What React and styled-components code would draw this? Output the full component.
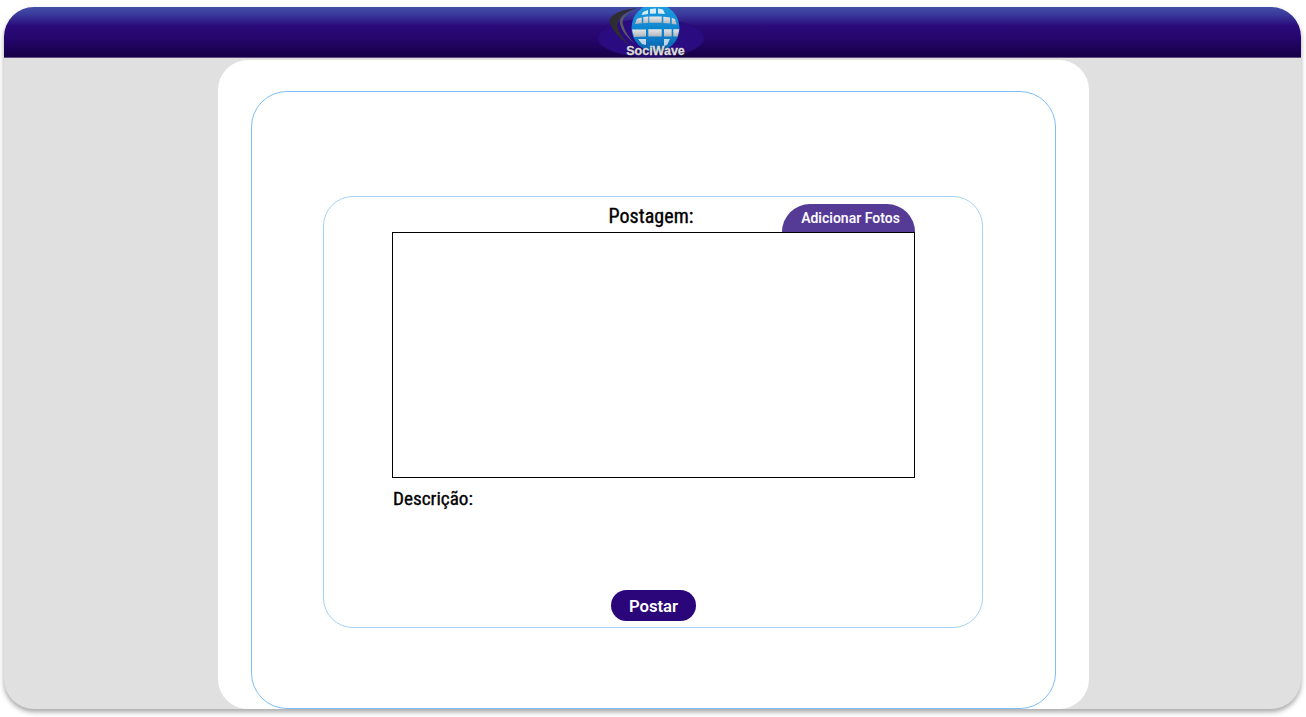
import React from "react";
import styled, { createGlobalStyle } from "styled-components";

const Global = createGlobalStyle`
  html, body { margin: 0; padding: 0; background: #fff; }
  body { font-family: Roboto, "Liberation Sans", sans-serif; }
  * { box-sizing: border-box; }
`;

const Frame = styled.div`
  width: 1297px;
  height: 702px;
  margin: 7px 0 8px 4px;
  background: #e0e0e0;
  border-radius: 30px;
  box-shadow: 0 3px 5px rgba(0, 0, 0, 0.35);
  display: flex;
  flex-direction: column;
  overflow: hidden;
`;

const Header = styled.header`
  flex: 0 0 51px;
  min-height: 0;
  display: flex;
  justify-content: center;
  background: linear-gradient(180deg, #424ea6 0%, #3a3a9c 15%, #2a0a78 38%, #26066e 60%, #170048 100%);
  border-bottom: 1px solid #5a4f80;
`;

const Logo = styled.svg`
  display: block;
  flex: none;
  width: 110px;
  height: 60px;
  margin-left: 1px;
  overflow: visible;
  position: relative;
  z-index: 1;
`;

const LogoText = styled.text`
  font-family: "Liberation Sans", Arial, sans-serif;
  font-weight: 700;
  font-size: 12.5px;
  fill: #dcdcdc;
  stroke: #dcdcdc;
  stroke-width: 0.3px;
`;

const Main = styled.main`
  flex: 1;
  min-height: 0;
  display: flex;
  justify-content: center;
  padding: 2px 0 0 2px;
`;

const Card = styled.section`
  width: 871px;
  background: #fff;
  border-radius: 30px;
  padding: 31px 33px 0;
`;

const Outer = styled.div`
  width: 805px;
  height: 618px;
  border: 1px solid #7dbdf8;
  border-radius: 36px;
  padding: 104px 72px 0 71px;
`;

const PostBox = styled.div`
  width: 660px;
  height: 432px;
  border: 1px solid #a5d2f8;
  border-radius: 30px;
  padding: 7px 67px 0 68px;
  display: flex;
  flex-direction: column;
`;

const TopRow = styled.div`
  height: 28px;
  position: relative;
  display: flex;
  justify-content: center;
`;

const Label = styled.div`
  font-size: 20px;
  font-weight: 400;
  line-height: 24px;
  color: #000;
  font-stretch: 75%;
  -webkit-text-stroke: 0.35px #000;
`;

const Title = styled(Label)`
  margin-left: -5px;
  letter-spacing: 0.05px;
`;

const Description = styled(Label)`
  font-size: 19.2px;
  margin: 9px 0 0 1px;
  align-self: flex-start;
`;

const AddPhotos = styled.button`
  position: absolute;
  right: 0;
  top: 0;
  width: 133px;
  height: 28px;
  border: 0;
  padding: 0 0 0 4px;
  background: #553a96;
  color: #fbf9fe;
  border-radius: 28px 28px 0 0;
  font: 600 14px Roboto, sans-serif;
`;

const PhotoArea = styled.div`
  width: 523px;
  height: 246px;
  border: 1px solid #000;
  background: #fff;
  flex: none;
  position: relative;
`;

const Submit = styled.button`
  align-self: center;
  width: 85px;
  height: 31px;
  margin-top: 79px;
  border: 0;
  padding: 2px 0 0;
  background: #2a067a;
  color: #fff;
  border-radius: 16px;
  font: 600 16.7px Roboto, sans-serif;
`;

const SociWaveLogo = () => (
  <Logo viewBox="0 0 110 60" role="img" aria-label="SociWave">
    <defs>
      <linearGradient id="sea" x1="0" y1="0" x2="0" y2="1">
        <stop offset="0" stopColor="#1f9fe2" />
        <stop offset="0.7" stopColor="#0a7cc8" />
        <stop offset="1" stopColor="#0a5ea8" />
      </linearGradient>
      <linearGradient id="tile" x1="0" y1="0" x2="0" y2="1">
        <stop offset="0" stopColor="#e6e7e9" />
        <stop offset="1" stopColor="#aeb2b8" />
      </linearGradient>
      <radialGradient id="glow">
        <stop offset="0" stopColor="#2c0c86" />
        <stop offset="0.94" stopColor="#2b0b80" />
        <stop offset="1" stopColor="#26076f" stopOpacity="0" />
      </radialGradient>
      <filter id="soft"><feGaussianBlur stdDeviation="0.4" /></filter>
      <filter id="shade"><feGaussianBlur stdDeviation="1.2" /></filter>
    </defs>
    <ellipse cx="53" cy="31" rx="55" ry="20" fill="url(#glow)" />
    <g filter="url(#soft)">
      <path d="M39 1.3 C25 2 9 8 12 16 C14 24 23 32 31 38 C24 30 18 22 20 15 C22 8 31 3.5 39 1.3Z" fill="#2f2f33" />
      <path d="M37 3.5 C29 6 23 11 25 18 C27 25 31 30 36 36 C30 31 23 24 22 16 C21 10 29 5 37 3.5Z" fill="#5b5b60" />
      <circle cx="57.5" cy="21" r="24" fill="url(#sea)" />
      <path d="M45 5 L50 3 L50 7 L43.5 8Z M52 2 L58 1.5 L58 6.5 L52 6.8Z M60 1.6 L65 2.4 L67 7 L60 6.5Z" fill="#d8ecf8" />
      <path d="M37 17 L39 11.8 L43.7 10.4 L43.7 16.2Z M45.3 10 L50.3 9.6 L50.3 15.8 L45.3 16.2Z" fill="url(#tile)" />
      <path d="M51.3 9.6 L63.7 9.6 L63.7 15.8 L51.3 15.8Z M65.3 9.8 L72 10.6 L72 16.6 L65.3 16Z M73.7 10.8 L77 12 L78.7 17.4 L73.7 17Z" fill="url(#tile)" />
      <path d="M34 22.4 L48 22.4 L48 29.6 L36 30Z M50.3 22.2 L63.7 22.2 L63.7 29.6 L50.3 29.6Z" fill="url(#tile)" />
      <path d="M66 22.2 L73.7 22.2 L73.7 29.6 L66 29.6Z M75.3 22.2 L81.3 22.2 L79.5 29.4 L75.3 29.6Z" fill="url(#tile)" />
      <path d="M40 32 L48 32 L48 38 L44 37Z M66 32 L72 32 L69 38 L66 39Z" fill="#bcd6e8" />
    </g>
    <text x="58.5" y="49" textAnchor="middle" fontFamily="Liberation Sans" fontWeight="700" fontSize="12.5" fill="#000" opacity="0.6" filter="url(#shade)">SociWave</text>
    <LogoText x="57.5" y="48" textAnchor="middle">SociWave</LogoText>
  </Logo>
);

export default function App() {
  return (
    <>
      <Global />
      <Frame>
        <Header>
          <SociWaveLogo />
        </Header>
        <Main>
          <Card>
            <Outer>
              <PostBox>
                <TopRow>
                  <Title>Postagem:</Title>
                  <AddPhotos>Adicionar Fotos</AddPhotos>
                </TopRow>
                <PhotoArea />
                <Description>Descrição:</Description>
                <Submit>Postar</Submit>
              </PostBox>
            </Outer>
          </Card>
        </Main>
      </Frame>
    </>
  );
}
